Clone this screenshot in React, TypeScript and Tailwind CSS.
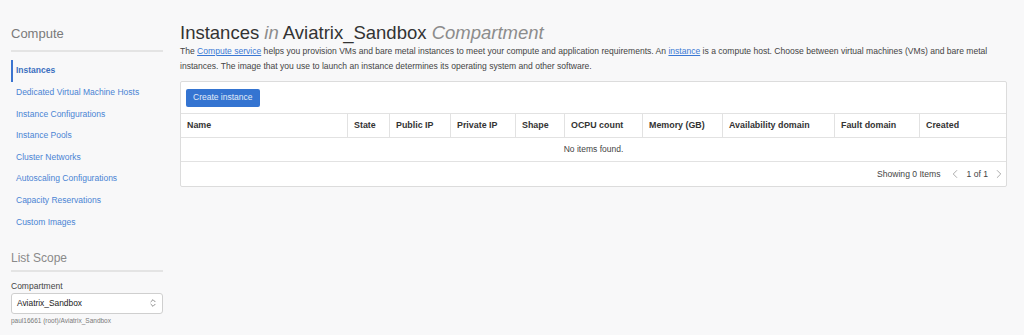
import React from "react";
import { ChevronLeft, ChevronRight, ChevronsUpDown } from "lucide-react";

const navItems = [
  "Instances",
  "Dedicated Virtual Machine Hosts",
  "Instance Configurations",
  "Instance Pools",
  "Cluster Networks",
  "Autoscaling Configurations",
  "Capacity Reservations",
  "Custom Images",
];

const columns = [
  "Name",
  "State",
  "Public IP",
  "Private IP",
  "Shape",
  "OCPU count",
  "Memory (GB)",
  "Availability domain",
  "Fault domain",
  "Created",
];

const Sidebar = () => (
  <aside className="w-[180px] shrink-0 pl-[11px] pr-[17px] pt-[24px]">
    <div className="border-b-2 border-[#e4e4e4] pb-[6px] text-[13px] leading-[20px] text-[#7a7a7a]">
      Compute
    </div>
    <nav className="mt-[8px] flex flex-col">
      {navItems.map((item, i) => (
        <a
          key={item}
          className={
            i === 0
              ? "flex h-[21.6px] items-center border-l-2 border-[#3b74d0] pl-[3px] text-[8.5px] font-bold text-[#3b6fc0]"
              : "flex h-[21.6px] items-center pl-[5px] text-[8.5px] text-[#4a84d4]"
          }
        >
          {item}
        </a>
      ))}
    </nav>
    <div className="mt-[15px] border-b-2 border-[#e4e4e4] pb-[2px] text-[12px] leading-[20px] text-[#8a8a8a]">
      List Scope
    </div>
    <div className="mt-[8px] text-[8.5px] leading-[12px] text-[#444]">Compartment</div>
    <div className="mt-[1px] flex h-[21px] items-center justify-between rounded-[3px] border border-[#cfcfcf] bg-white pl-[5px] pr-[4px] text-[8.4px] text-[#222]">
      <span>Aviatrix_Sandbox</span>
      <ChevronsUpDown size={10} strokeWidth={1.6} className="text-[#555]" />
    </div>
    <div className="mt-[2px] text-[6.5px] leading-[10px] text-[#7a7a7a]">
      paul16661 (root)/Aviatrix_Sandbox
    </div>
  </aside>
);

const InstancesTable = () => (
  <div className="mt-[7.5px] rounded-[2px] border border-[#dcdcdc] bg-white">
    <div className="flex h-[31px] items-center px-[5px]">
      <button className="flex h-[18px] items-center rounded-[2px] bg-[#3474d1] px-[7px] text-[8.5px] text-[#e2ebf8]">
        Create instance
      </button>
    </div>
    <div className="grid h-[25px] grid-cols-[166px_42px_61px_65px_49px_78px_80px_112px_85px_1fr] border-y border-[#e2e2e2]">
      {columns.map((col, i) => (
        <div
          key={col}
          className={
            "flex items-center pl-[6px] text-[8.9px] font-bold text-[#333]" +
            (i > 0 ? " border-l border-[#e2e2e2]" : "")
          }
        >
          {col}
        </div>
      ))}
    </div>
    <div className="flex h-[24px] items-center justify-center border-b border-[#e2e2e2] text-[8.5px] text-[#444]">
      No items found.
    </div>
    <div className="flex h-[24px] items-center justify-end gap-[4px] pr-0 text-[8.6px] text-[#444]">
      <span className="mr-[4px]">Showing 0 Items</span>
      <ChevronLeft size={14} strokeWidth={1.2} className="text-[#8a8a8a]" />
      <span>1 of 1</span>
      <ChevronRight size={14} strokeWidth={1.2} className="text-[#8a8a8a]" />
    </div>
  </div>
);

export default function App() {
  return (
    <div
      className="flex min-h-[335px] w-full bg-[#f8f8f9]"
      style={{ fontFamily: '"Liberation Sans", Arial, sans-serif' }}
    >
      <Sidebar />
      <main className="flex-1 pr-[17px] pt-[23px]">
        <h1 className="text-[18.5px] leading-[20px] text-[#333]">
          Instances <i className="text-[#8c8c8c]">in</i> Aviatrix_Sandbox{" "}
          <i className="text-[#8c8c8c]">Compartment</i>
        </h1>
        <p className="mt-[0.5px] text-[8.55px] leading-[15px] text-[#444]">
          The <a className="text-[#3a78d4] underline">Compute service</a> helps you provision VMs and bare metal
          instances to meet your compute and application requirements. An{" "}
          <a className="text-[#3a78d4] underline">instance</a> is a compute host. Choose between virtual machines
          (VMs) and bare metal instances. The image that you use to launch an instance determines its operating
          system and other software.
        </p>
        <InstancesTable />
      </main>
    </div>
  );
}
